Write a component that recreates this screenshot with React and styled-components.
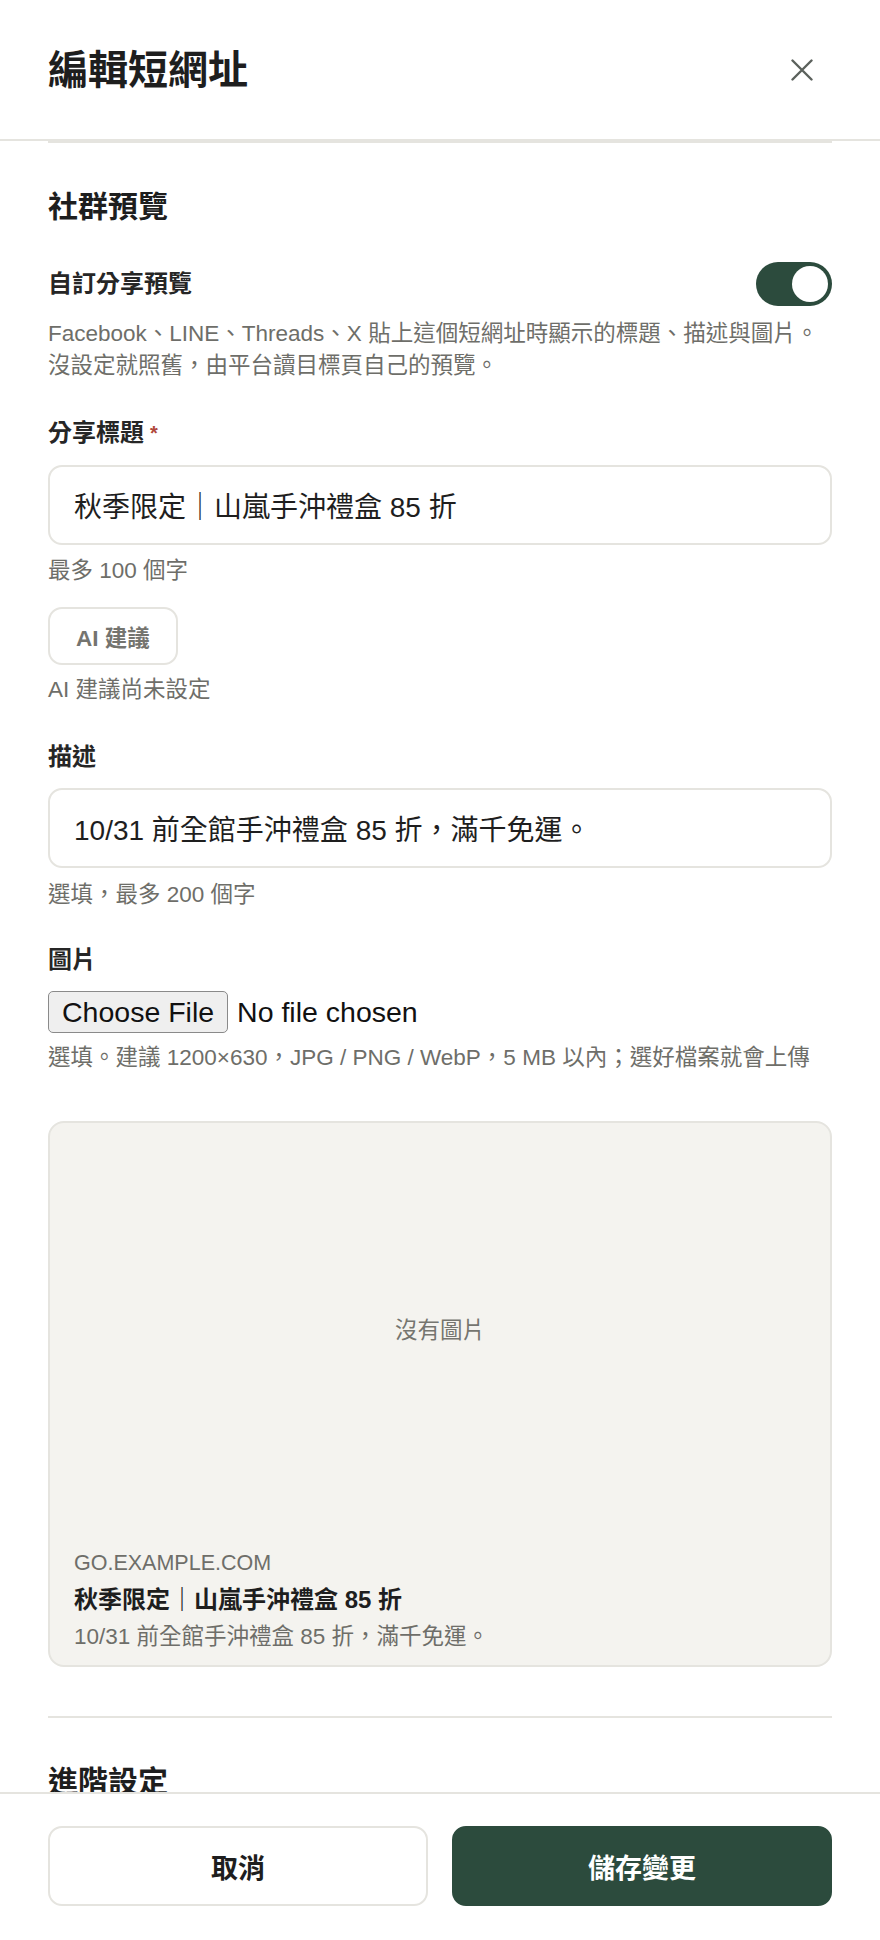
import styled, { createGlobalStyle } from 'styled-components';

const colors = {
   ink: '#1e1e1e',
   label: '#262626',
   muted: '#6e6e69',
   line: '#e5e4df',
   paper: '#f4f3ef',
   green: '#2c4b3d',
   star: '#b0483b',
};

const sans = `"Liberation Sans", "Noto Sans CJK TC", sans-serif`;

const GlobalStyle = createGlobalStyle`
   html, body, #root {
      margin: 0;
      padding: 0;
      height: 100%;
   }

   body {
      background: #ffffff;
      font-family: ${sans};
      color: ${colors.ink};
   }

   * {
      box-sizing: border-box;
   }
`;

const Page = styled.div`
   display: flex;
   flex-direction: column;
   height: 100vh;
   background: #ffffff;
`;

const Header = styled.header`
   display: flex;
   align-items: center;
   justify-content: space-between;

   height: 141px;
   padding: 0 48px;

   border-bottom: 2px solid ${colors.line};
   flex-shrink: 0;
`;

const Title = styled.h1`
   margin: 0;
   font-size: 40px;
   font-weight: 700;
   line-height: 48px;
   color: ${colors.ink};
`;

const CloseButton = styled.button`
   display: flex;
   align-items: center;
   justify-content: center;

   width: 60px;
   height: 60px;
   padding: 0;

   background: none;
   border: none;
   color: #5b615c;
   cursor: pointer;
`;

const Body = styled.main`
   flex: 1;
   overflow: hidden;
`;

const Divider = styled.div`
   height: 2px;
   margin: 0 48px;
   background: ${colors.line};
`;

const Section = styled.section`
   margin: 0 48px;
   padding: 45px 0 49px;
   border-bottom: 2px solid ${colors.line};
`;

const SectionTitle = styled.h2`
   margin: 0;
   font-size: 30px;
   font-weight: 700;
   line-height: 38px;
   color: ${colors.ink};
`;

const ToggleRow = styled.div`
   display: flex;
   align-items: center;
   justify-content: space-between;

   height: 44px;
   margin-top: 36px;
`;

const Field = styled.div`
   display: flex;
   flex-direction: column;
   align-items: flex-start;

   margin-top: ${(p) => p.$gap}px;
`;

const Label = styled.label`
   font-size: 24px;
   font-weight: 700;
   line-height: 32px;
   color: ${colors.label};
`;

const Required = styled.span`
   margin-left: 6px;
   font-size: 20px;
   color: ${colors.star};
   vertical-align: top;
`;

const Description = styled.p`
   margin: 12px 0 0;
   font-size: 22.5px;
   line-height: 32px;
   color: ${colors.muted};
`;

const Hint = styled.p`
   margin: ${(p) => p.$gap}px 0 0;
   font-size: 22.5px;
   line-height: 30px;
   color: ${colors.muted};
`;

const Switch = styled.button`
   display: flex;
   align-items: center;
   justify-content: ${(p) => (p.$on ? 'flex-end' : 'flex-start')};

   width: 76px;
   height: 44px;
   padding: 4px;

   background: ${(p) => (p.$on ? colors.green : colors.line)};
   border: none;
   border-radius: 22px;
   cursor: pointer;
`;

const Knob = styled.span`
   width: 36px;
   height: 36px;
   border-radius: 50%;
   background: #ffffff;
`;

const TextInput = styled.input`
   width: 100%;
   height: 80px;
   margin-top: ${(p) => p.$gap}px;
   padding: 0 24px;

   font-family: ${sans};
   font-size: 28px;
   color: ${colors.ink};

   background: #ffffff;
   border: 2px solid ${colors.line};
   border-radius: 14px;
   outline: none;
`;

const GhostButton = styled.button`
   height: 58px;
   margin-top: 21px;
   padding: 0 26px;

   font-family: ${sans};
   font-size: 22.5px;
   font-weight: 700;
   color: #74746f;

   background: #ffffff;
   border: 2px solid ${colors.line};
   border-radius: 14px;
   cursor: pointer;
`;

const FileInput = styled.input`
   width: 100%;
   height: 42px;
   margin-top: 15px;

   font-family: "Liberation Sans", Arial, sans-serif;
   font-size: 28.5px;
   line-height: 34px;
   color: #111111;

   &::file-selector-button {
      height: 42px;
      margin-right: 9px;
      padding: 0 13px;

      font-family: "Liberation Sans", Arial, sans-serif;
      font-size: 28.5px;
      color: #111111;

      background: #efefef;
      border: 1.5px solid #8a8a8a;
      border-radius: 5px;
   }
`;

const PreviewCard = styled.div`
   margin-top: 48px;
   overflow: hidden;

   background: ${colors.paper};
   border: 2px solid ${colors.line};
   border-radius: 16px;
`;

const PreviewImage = styled.div`
   display: flex;
   align-items: center;
   justify-content: center;

   aspect-ratio: 1200 / 630;

   font-size: 22.5px;
   color: #75756f;
`;

const PreviewMeta = styled.div`
   display: flex;
   flex-direction: column;
   gap: 6px;

   padding: 15.5px 24px 13px;
`;

const PreviewDomain = styled.div`
   font-size: 21.5px;
   line-height: 30px;
   color: ${colors.muted};
`;

const PreviewTitle = styled.div`
   font-size: 24px;
   font-weight: 700;
   line-height: 32px;
   color: ${colors.ink};
`;

const PreviewText = styled.div`
   font-size: 22.5px;
   line-height: 30px;
   color: ${colors.muted};
`;

const Footer = styled.footer`
   display: grid;
   grid-template-columns: 1fr 1fr;
   gap: 24px;

   padding: 32px 48px 34px;

   border-top: 2px solid ${colors.line};
   flex-shrink: 0;
`;

const FooterButton = styled.button`
   height: 80px;

   font-family: ${sans};
   font-size: 27px;
   font-weight: 700;
   color: ${(p) => (p.$primary ? '#ffffff' : colors.ink)};

   background: ${(p) => (p.$primary ? colors.green : '#ffffff')};
   border: 2px solid ${(p) => (p.$primary ? colors.green : colors.line)};
   border-radius: 14px;
   cursor: pointer;
`;

const CloseIcon = () => (
   <svg width="22" height="22" viewBox="0 0 22 22" fill="none">
      <path
         d="M1.5 1.5 L20.5 20.5 M20.5 1.5 L1.5 20.5"
         stroke="currentColor"
         strokeWidth="2.4"
         strokeLinecap="round"
      />
   </svg>
);

const shareTitle = '秋季限定｜山嵐手沖禮盒 85 折';
const shareText = '10/31 前全館手沖禮盒 85 折，滿千免運。';

export default function App() {
   return (
      <Page>
         <GlobalStyle />
         <Header>
            <Title>編輯短網址</Title>
            <CloseButton aria-label="關閉">
               <CloseIcon />
            </CloseButton>
         </Header>

         <Body>
            <Divider />
            <Section>
               <SectionTitle>社群預覽</SectionTitle>

               <ToggleRow>
                  <Label>自訂分享預覽</Label>
                  <Switch $on={true} aria-label="自訂分享預覽">
                     <Knob />
                  </Switch>
               </ToggleRow>
               <Description>
                  Facebook、LINE、Threads、X 貼上這個短網址時顯示的標題、描述與圖片。
                  <br />
                  沒設定就照舊，由平台讀目標頁自己的預覽。
               </Description>

               <Field $gap={35}>
                  <Label>
                     分享標題<Required>*</Required>
                  </Label>
                  <TextInput $gap={16} defaultValue={shareTitle} />
                  <Hint $gap={11}>最多 100 個字</Hint>
                  <GhostButton>AI 建議</GhostButton>
                  <Hint $gap={10}>AI 建議尚未設定</Hint>
               </Field>

               <Field $gap={36}>
                  <Label>描述</Label>
                  <TextInput $gap={15} defaultValue={shareText} />
                  <Hint $gap={12}>選填，最多 200 個字</Hint>
               </Field>

               <Field $gap={34}>
                  <Label>圖片</Label>
                  <FileInput type="file" accept="image/*" />
                  <Hint $gap={10}>
                     選填。建議 1200×630，JPG / PNG / WebP，5 MB 以內；選好檔案就會上傳
                  </Hint>
               </Field>

               <PreviewCard>
                  <PreviewImage>沒有圖片</PreviewImage>
                  <PreviewMeta>
                     <PreviewDomain>GO.EXAMPLE.COM</PreviewDomain>
                     <PreviewTitle>{shareTitle}</PreviewTitle>
                     <PreviewText>{shareText}</PreviewText>
                  </PreviewMeta>
               </PreviewCard>
            </Section>

            <Section>
               <SectionTitle>進階設定</SectionTitle>
            </Section>
         </Body>

         <Footer>
            <FooterButton>取消</FooterButton>
            <FooterButton $primary>儲存變更</FooterButton>
         </Footer>
      </Page>
   );
}
